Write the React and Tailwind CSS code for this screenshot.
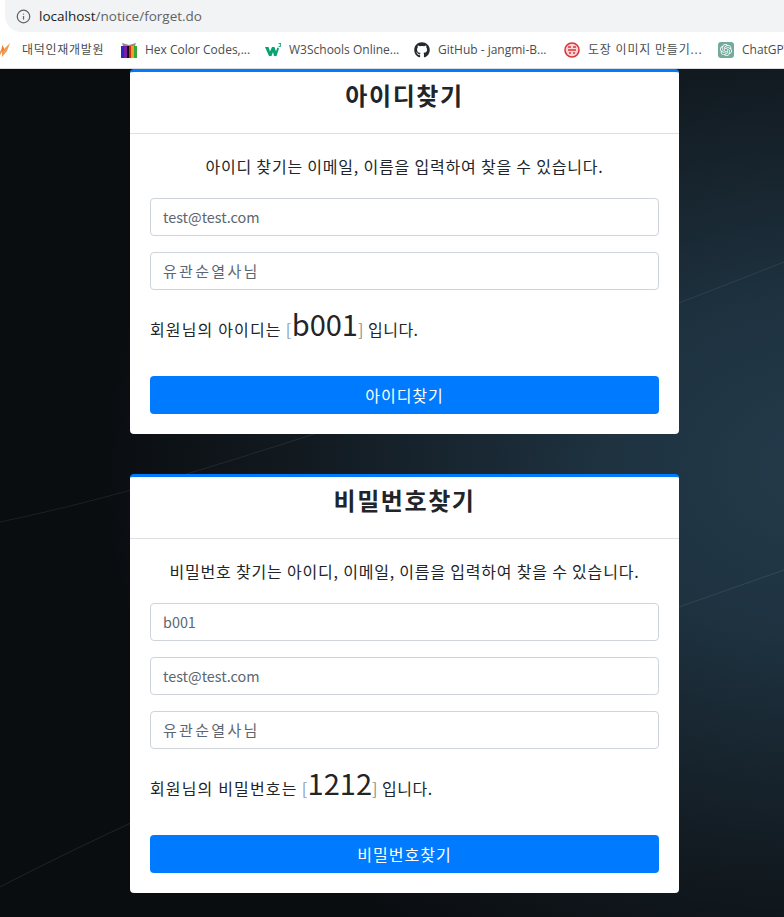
import React from 'react'
import { Info } from 'lucide-react'
import { FaGithub } from 'react-icons/fa'
import { SiOpenai } from 'react-icons/si'

const FlameIcon = () => (
  <svg width="16" height="16" viewBox="0 0 16 16" className="shrink-0">
    <path d="M0 14 L4 8 L5.5 3 L7 7 L13 1 L10 9 L5 15 L5 10 L2 15 Z" fill="#f09a55" />
    <path d="M5.5 3 L7 7 L5 10 Z" fill="#e8751e" />
  </svg>
)

const BookIcon = () => (
  <svg width="16" height="16" viewBox="0 0 16 16" className="shrink-0">
    <path d="M1 1 L8 3 L15 1 L14 4 L2 4 Z" fill="#8a8f8a" />
    <rect x="0" y="4" width="3" height="12" fill="#2a2ac8" />
    <rect x="3" y="4" width="3" height="12" fill="#7a1fa0" />
    <rect x="6" y="4" width="2" height="12" fill="#111111" />
    <rect x="8" y="4" width="2" height="12" fill="#d92a1c" />
    <rect x="10" y="4" width="3" height="12" fill="#f3a01c" />
    <rect x="13" y="4" width="3" height="12" fill="#3aa63a" />
  </svg>
)

const W3Icon = () => (
  <svg width="16" height="16" viewBox="0 0 16 16" className="shrink-0">
    <path d="M0 5 L3.5 5 L5 9.5 L7 5 L9.5 5 L11 9.5 L12.3 5.5 L14 6.5 L11.5 14 L9 14 L8 10 L6.5 14 L4 14 Z" fill="#04a372" />
    <path d="M13.5 1.5 L16 1.5 L15 3 L16 4.2 L13.5 4.6" fill="none" stroke="#04a372" strokeWidth="0.9" />
  </svg>
)

const StampIcon = () => (
  <svg width="16" height="16" viewBox="0 0 16 16" className="shrink-0">
    <circle cx="8" cy="8" r="7" fill="#f6d5d5" stroke="#d9363e" strokeWidth="1.6" />
    <path d="M4 5 H7 M9 5 H12 M4 8 H12 M5 11 H7 M9 11 H11" stroke="#d9363e" strokeWidth="1.6" />
  </svg>
)

const GptIcon = () => (
  <span className="w-4 h-4 shrink-0 rounded-[3px] bg-[#74aa9c] flex items-center justify-center text-white">
    <SiOpenai size={12} />
  </span>
)

const BOOKMARKS = [
  { icon: <FlameIcon />, label: '대덕인재개발원', width: 'w-[124px]', ml: '-ml-[3px]', gap: 'gap-[9px]', text: 'tracking-[0.7px]' },
  { icon: <BookIcon />, label: 'Hex Color Codes,...', width: 'w-[144px]', ml: '', gap: 'gap-2', text: '' },
  { icon: <W3Icon />, label: 'W3Schools Online...', width: 'w-[149px]', ml: '', gap: 'gap-2', text: '' },
  { icon: <FaGithub size={16} color="#24292e" className="shrink-0" />, label: 'GitHub - jangmi-B...', width: 'w-[150px]', ml: '', gap: 'gap-2', text: '' },
  { icon: <StampIcon />, label: '도장 이미지 만들기...', width: 'w-[154px]', ml: '', gap: 'gap-2', text: 'tracking-[0.8px]' },
  { icon: <GptIcon />, label: 'ChatGPT', width: 'w-[70px]', ml: '', gap: 'gap-2', text: '' },
]

function BrowserBar() {
  return (
    <div className="bg-white border-b border-[#dadce0] h-[69px] overflow-hidden font-['Open_Sans','Noto_Sans_CJK_KR',sans-serif]">
      <div className="h-8 ml-[5px] bg-[#f1f3f4] rounded-bl-2xl flex items-center pl-[11px]">
        <Info size={15} color="#5f6368" strokeWidth={2} />
        <span className="ml-[8px] text-[13.5px] text-[#5f6368] whitespace-nowrap">
          <span className="text-[#202124]">localhost</span>/notice/forget.do
        </span>
      </div>
      <div className="h-9 flex items-center whitespace-nowrap text-xs text-[#4a4d50]">
        {BOOKMARKS.map(b => (
          <div key={b.label} className={`flex items-center shrink-0 ${b.width} ${b.ml} ${b.gap}`}>
            {b.icon}
            <span className={b.text}>{b.label}</span>
          </div>
        ))}
      </div>
    </div>
  )
}

function Field({ value, wide }) {
  return (
    <input
      readOnly
      value={value}
      className={`block w-full h-[38px] px-3 pb-[2px] mb-4 bg-white border border-[#ced4da] rounded text-[#5c6670] outline-none ${wide ? 'text-[15px] tracking-[2.3px]' : 'text-[14.4px]'}`}
    />
  )
}

function FindCard({ title, desc, fields, label, result, button }) {
  return (
    <section className="w-[549px] ml-[130px] bg-white rounded border-t-[3px] border-[#007bff] text-[#212529]">
      <div className="h-[62px] pt-2 border-b border-[#dfdfdf] text-center">
        <h4 className="text-2xl leading-[29px] font-bold tracking-[1.6px]">{title}</h4>
      </div>
      <div className="p-5">
        <p className="text-base tracking-[0.8px] leading-6 text-center mb-5">{desc}</p>
        {fields.map(f => <Field key={f} value={f} wide={f.startsWith('유')} />)}
        <p className="h-[70px] text-base tracking-[0.5px] leading-[34px] whitespace-nowrap">
          <span className="tracking-[1.15px]">{label}</span> <span className="text-[#8b9bab]">[</span>
          <span className="text-[29px] tracking-normal font-normal">{result}</span>
          <span className="text-[#8b8b8b]">]</span> 입니다.
        </p>
        <button className="block w-full h-[38px] bg-[#007bff] text-white text-base tracking-[1px] rounded">{button}</button>
      </div>
    </section>
  )
}

export default function App() {
  return (
    <div className="w-[784px] h-[917px] overflow-hidden font-['Noto_Sans_CJK_KR','Noto_Sans',sans-serif]">
      <BrowserBar />
      <main className="relative h-[848px] bg-[radial-gradient(ellipse_720px_560px_at_820px_400px,#243b4b_0%,#1e3240_30%,#131c23_68%,#0a0d10_100%)]">
        {/* background streaks */}
        <svg className="absolute inset-0" width="784" height="848" viewBox="0 0 784 848" fill="none">
          <path d="M0 453 C 120 428 220 395 330 360 S 640 250 784 193" stroke="#ffffff" strokeOpacity="0.08" />
          <path d="M0 818 C 150 740 400 630 679 538 L 784 501" stroke="#ffffff" strokeOpacity="0.09" />
        </svg>
        <div className="relative flex flex-col gap-10">
          <FindCard
            title="아이디찾기"
            desc="아이디 찾기는 이메일, 이름을 입력하여 찾을 수 있습니다."
            fields={['test@test.com', '유관순열사님']}
            label="회원님의 아이디는"
            result="b001"
            button="아이디찾기"
          />
          <FindCard
            title="비밀번호찾기"
            desc="비밀번호 찾기는 아이디, 이메일, 이름을 입력하여 찾을 수 있습니다."
            fields={['b001', 'test@test.com', '유관순열사님']}
            label="회원님의 비밀번호는"
            result="1212"
            button="비밀번호찾기"
          />
        </div>
      </main>
    </div>
  )
}
